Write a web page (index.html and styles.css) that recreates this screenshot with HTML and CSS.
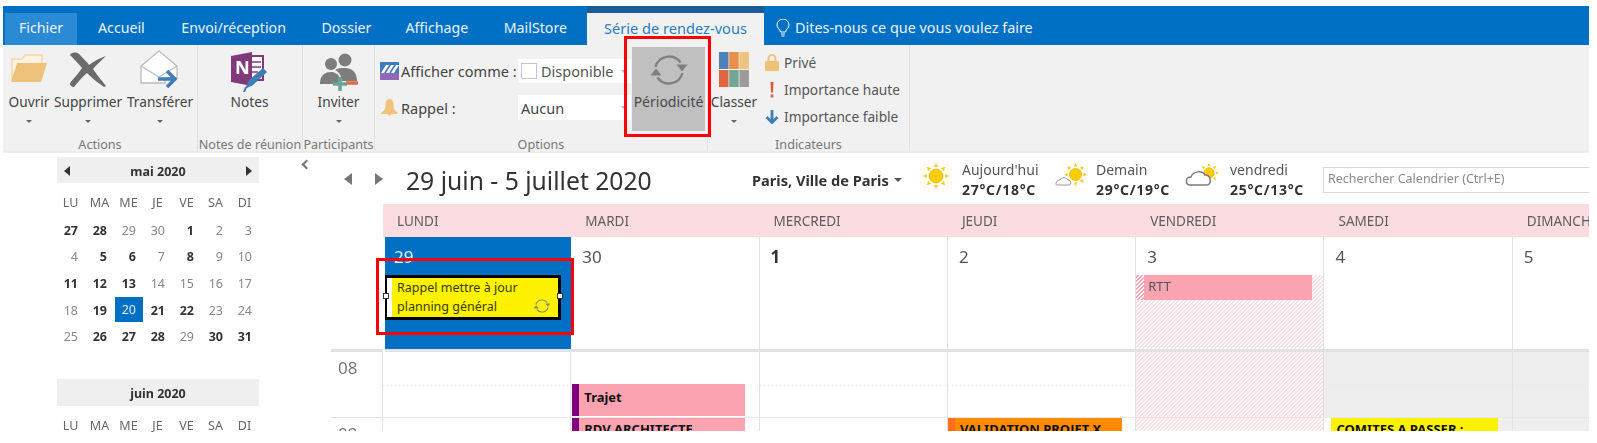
FILE: index.html
```html
<!DOCTYPE html>
<html lang="fr">
<head>
<meta charset="utf-8">
<title>Série de rendez-vous</title>
<link rel="stylesheet" href="styles.css">
</head>
<body>
<svg class="defs" width="0" height="0" aria-hidden="true">
  <symbol id="sync" viewBox="0 0 40 40">
    <path d="M6.500 17A14 14 0 0 1 31.500 12.500M33.500 23A14 14 0 0 1 8.500 27.500" fill="none" stroke="currentColor" stroke-width="2.300"/>
    <path d="M27.500 14.500H38.500L33 21.500ZM1.500 25.500H12.500L7 18.500Z" fill="currentColor"/>
  </symbol>
  <symbol id="sun" viewBox="0 0 26 26">
    <path fill="#ffc90e" d="M13 0l2 4h-4zM13 26l-2-4h4zM0 13l4-2v4zM26 13l-4 2v-4zM3.800 3.800l4.300 1.400-2.900 2.900zM22.200 22.200l-4.300-1.400 2.900-2.900zM22.200 3.800l-1.400 4.300-2.900-2.900zM3.800 22.200l1.400-4.300 2.900 2.900z"/>
    <circle cx="13" cy="13" r="6.800" fill="#ffcc00" stroke="#f7b500"/>
  </symbol>
</svg>

<div class="app">
  <nav class="tabs">
    <span class="tab tab-file">Fichier</span>
    <span class="tab tab-a">Accueil</span>
    <span class="tab tab-b">Envoi/réception</span>
    <span class="tab tab-c">Dossier</span>
    <span class="tab tab-d">Affichage</span>
    <span class="tab tab-e">MailStore</span>
    <span class="tab tab-active">Série de rendez-vous</span>
    <span class="tell">
      <svg class="bulb" viewBox="0 0 14 18"><path d="M4.500 13C4 10 1 9 1 6a6 6 0 0 1 12 0c0 3-3 4-3.500 7zM5 15h4M5.500 17h3" fill="none" stroke="#fff" stroke-width="1"/></svg>
      Dites-nous ce que vous voulez faire
    </span>
  </nav>

  <section class="ribbon">
    <div class="group g-actions">
      <div class="group-body actions-body">
        <div class="big b-open">
          <svg class="ico" width="38" height="30" viewBox="0 0 38 30"><path d="M2 27V6h10l3-4h17v8" fill="#fdf3e2" stroke="#f2d7a8" stroke-width="1.500"/><path d="M1 29L7 10h30L31 29z" fill="#efc27c"/></svg>
          <span class="lbl">Ouvrir</span><i class="caret"></i>
        </div>
        <div class="big b-del">
          <svg class="ico" width="38" height="36" viewBox="0 0 38 36"><path d="M1 3C3 0 7 0 10 2C14 6 18 10 20 13C25 9 31 6 37 4C32 9 27 13 24 17C28 23 33 29 37 34L35 35C29 31 23 26 18 21C13 25 9 30 5 35C2 35 1 33 1 31C5 26 10 21 13 16C9 11 5 7 1 3Z" fill="#6b6b6b"/></svg>
          <span class="lbl">Supprimer</span><i class="caret"></i>
        </div>
        <div class="big b-fwd">
          <svg class="ico" width="40" height="40" viewBox="0 0 40 40"><path d="M1 16L19 1L37 16V28H25V33H1Z" fill="#fff" stroke="#bdbdbd" stroke-width="1.300"/><path d="M1 16L19 27L37 16" fill="none" stroke="#bdbdbd" stroke-width="1.300"/><path d="M18 32H33M27 24L35 32L27 40" transform="translate(0 -3)" fill="none" stroke="#3f7cb8" stroke-width="3.500"/></svg>
          <span class="lbl">Transférer</span><i class="caret"></i>
        </div>
      </div>
      <div class="group-label">Actions</div>
    </div>

    <div class="group g-notes">
      <div class="group-body notes-body">
        <div class="big b-notes">
          <svg class="ico" width="40" height="40" viewBox="0 0 40 40"><path d="M20 4H33V28H20z" fill="#fff" stroke="#80397b" stroke-width="2"/><path d="M22 10h9M22 15h9M22 20h6" stroke="#80397b" stroke-width="1.500"/><path d="M1 4L22 0V34L1 30Z" fill="#80397b"/><text class="n-mark" x="5" y="22">N</text><path d="M15 37L19 28L33 16L37 20L23 33Z" fill="#3f7cb8"/><path d="M14 40L16 35" stroke="#3f7cb8" stroke-width="2"/></svg>
          <span class="lbl">Notes</span>
        </div>
      </div>
      <div class="group-label">Notes de réunion</div>
    </div>

    <div class="group g-part">
      <div class="group-body part-body">
        <div class="big b-inv">
          <svg class="ico" width="40" height="38" viewBox="0 0 40 38"><circle cx="12" cy="11" r="6" fill="#7d7d7d"/><circle cx="26" cy="7" r="6.500" fill="#7d7d7d"/><path d="M1 31C1 22 6 19 12 19C16 19 20 21 21 26L21 31Z" fill="#7d7d7d"/><path d="M16 17C19 15 22 15 26 15C33 15 38 19 38 28H23C22 22 20 19 16 17Z" fill="#7d7d7d"/><path d="M21 24V38M14 31H28" stroke="#66a596" stroke-width="3.500"/><path d="M27 30H39" stroke="#e06c45" stroke-width="3.500"/></svg>
          <span class="lbl">Inviter</span><i class="caret"></i>
        </div>
      </div>
      <div class="group-label">Participants</div>
    </div>

    <div class="group g-options">
      <div class="group-body options-body">
        <div class="form-col">
          <div class="form-row">
            <svg class="show-ico" width="19" height="18" viewBox="0 0 19 18"><rect width="19" height="11" fill="#3e7cc0"/><rect y="11" width="19" height="7" fill="#9168b8"/><path d="M1 11L6 3H9L4 11ZM6 11L11 3H14L9 11ZM11 11L16 3H19L14 11Z" fill="#fff"/></svg>
            <span class="form-label">Afficher comme :</span>
            <span class="combo"><i class="swatch"></i>Disponible</span>
          </div>
          <div class="form-row row-two">
            <svg class="bell-ico" width="19" height="17" viewBox="0 0 16 17"><path d="M8 0C11 0 12 3 12 6C12 10 13 11 15 13H1C3 11 4 10 4 6C4 3 5 0 8 0Z" fill="#f0c27d"/><path d="M0 13H16V15H0ZM6 15H10L8 17Z" fill="#f0c27d"/></svg>
            <span class="form-label">Rappel :</span>
            <span class="combo combo-b">Aucun</span>
          </div>
        </div>
        <div class="big b-recur">
          <svg class="ico sync-lg"><use href="#sync"/></svg>
          <span class="lbl">Périodicité</span>
        </div>
      </div>
      <div class="group-label">Options</div>
    </div>

    <div class="group g-tags">
      <div class="group-body tags-body">
        <div class="big b-class">
          <svg class="ico" width="30" height="35" viewBox="0 0 30 35">
            <rect width="9.500" height="17" fill="#4d81b8"/><rect x="10.200" width="9.500" height="17" fill="#e8904a"/><rect x="20.400" width="9.500" height="17" fill="#eec27f"/>
            <rect y="18" width="9.500" height="17" fill="#e06540"/><rect x="10.200" y="18" width="9.500" height="17" fill="#73a795"/><rect x="20.400" y="18" width="9.500" height="17" fill="#9a9a9a"/>
          </svg>
          <span class="lbl">Classer</span><i class="caret"></i>
        </div>
        <div class="flags">
          <div class="flag">
            <svg class="flag-ico" width="14" height="17" viewBox="0 0 14 17"><path d="M3.500 8V4.500a3.500 3.500 0 0 1 7 0V8" fill="none" stroke="#efc27c" stroke-width="2"/><rect y="7" width="14" height="10" rx="1" fill="#efc27c"/></svg>
            <span>Privé</span>
          </div>
          <div class="flag">
            <svg class="flag-ico" width="14" height="16" viewBox="0 0 14 16"><path d="M5.500 0H8.500L8 10.500H6ZM5.700 12.500H8.300V15.500H5.700Z" fill="#dc5a36"/></svg>
            <span>Importance haute</span>
          </div>
          <div class="flag">
            <svg class="flag-ico" width="14" height="14" viewBox="0 0 14 14"><path d="M7 0V12M1.500 7L7 12.500L12.500 7" fill="none" stroke="#3f7cb8" stroke-width="2.800"/></svg>
            <span>Importance faible</span>
          </div>
        </div>
      </div>
      <div class="group-label">Indicateurs</div>
    </div>
  </section>

  <div class="body">
    <aside class="sidebar">
      <button class="collapse" aria-label="Réduire"></button>
      <div class="month">
        <div class="month-head"><i class="tri tri-l"></i><span>mai 2020</span><i class="tri tri-r"></i></div>
        <div class="dow"><span>LU</span><span>MA</span><span>ME</span><span>JE</span><span>VE</span><span>SA</span><span>DI</span></div>
        <div class="dates">
          <b>27</b><b>28</b><span>29</span><span>30</span><b>1</b><span>2</span><span>3</span>
          <span>4</span><b>5</b><b>6</b><span>7</span><b>8</b><span>9</span><span>10</span>
          <b>11</b><b>12</b><b>13</b><span>14</span><span>15</span><span>16</span><span>17</span>
          <span>18</span><b>19</b><span class="today">20</span><b>21</b><b>22</b><span>23</span><span>24</span>
          <span>25</span><b>26</b><b>27</b><b>28</b><span>29</span><b>30</b><b>31</b>
        </div>
      </div>
      <div class="month month-2">
        <div class="month-head head-center"><span>juin 2020</span></div>
        <div class="dow"><span>LU</span><span>MA</span><span>ME</span><span>JE</span><span>VE</span><span>SA</span><span>DI</span></div>
      </div>
    </aside>

    <main class="main">
      <header class="topbar">
        <i class="nav-tri nav-l"></i><i class="nav-tri nav-r"></i>
        <h1 class="range">29 juin - 5 juillet 2020</h1>
        <span class="place">Paris, Ville de Paris</span><i class="caret caret-place"></i>
        <svg class="w-ico w-1"><use href="#sun"/></svg>
        <div class="weather w-t1"><span>Aujourd'hui</span><b>27°C/18°C</b></div>
        <svg class="w-2" width="32" height="24" viewBox="0 0 32 24"><use href="#sun" x="9" y="0" width="23" height="23"/><path d="M2 22C0 22 1 17 5 17C6 14 12 14 13 17C16 17 17 22 14 22Z" fill="#fff" stroke="#9a9a9a"/></svg>
        <div class="weather w-t2"><span>Demain</span><b>29°C/19°C</b></div>
        <svg class="w-3" width="36" height="24" viewBox="0 0 36 24"><use href="#sun" x="14" y="0" width="20" height="20"/><path d="M5 22C0 22 0 14 6 14C8 8 17 7 20 12C26 11 27 22 22 22Z" fill="#fff" stroke="#7c7c7c" stroke-width="1.500"/></svg>
        <div class="weather w-t3"><span>vendredi</span><b>25°C/13°C</b></div>
        <div class="search">Rechercher Calendrier (Ctrl+E)</div>
      </header>

      <div class="cal">
        <div class="corner"></div>
        <div class="dayname">LUNDI</div><div class="dayname">MARDI</div><div class="dayname">MERCREDI</div><div class="dayname">JEUDI</div><div class="dayname">VENDREDI</div><div class="dayname">SAMEDI</div><div class="dayname">DIMANCHE</div>

        <div class="gutter-top"></div>
        <div class="allday allday-sel"><span class="num num-w">29</span>
          <div class="appt">
            <i class="grip grip-l"></i><i class="grip grip-r"></i>
            <span>Rappel mettre à jour<br>planning général</span>
            <svg class="appt-sync"><use href="#sync"/></svg>
          </div>
        </div>
        <div class="allday"><span class="num">30</span></div>
        <div class="allday"><span class="num num-b">1</span></div>
        <div class="allday"><span class="num">2</span></div>
        <div class="allday allday-rtt"><span class="num">3</span><div class="rtt"><i class="rtt-hatch"></i><span>RTT</span></div></div>
        <div class="allday"><span class="num">4</span></div>
        <div class="allday"><span class="num">5</span></div>

        <div class="hours"><span>08</span></div>
        <div class="slot"></div>
        <div class="slot"><div class="ev ev-trajet"><i class="stripe st-purple"></i><b>Trajet</b></div></div>
        <div class="slot"></div>
        <div class="slot"></div>
        <div class="slot slot-oof"></div>
        <div class="slot slot-off"></div>
        <div class="slot slot-off"></div>

        <div class="hours hours-9"><span>09</span></div>
        <div class="slot2"></div>
        <div class="slot2"><div class="ev ev-rdv"><i class="stripe st-purple"></i><b>RDV ARCHITECTE</b></div></div>
        <div class="slot2"></div>
        <div class="slot2"><div class="ev ev-val"><i class="stripe st-orange"></i><b>VALIDATION PROJET X</b></div></div>
        <div class="slot2 slot-oof"></div>
        <div class="slot2 slot-off"><div class="ev ev-com"><i class="stripe st-white"></i><b>COMITES A PASSER :</b></div></div>
        <div class="slot2 slot-off"></div>
      </div>
    </main>
  </div>
  <div class="mark mark-recur"></div>
  <div class="mark mark-appt"></div>
</div>
</body>
</html>
```
FILE: styles.css
```css
* { box-sizing: border-box; }
html, body { margin: 0; padding: 0; background: #fff; }
body { font-family: "Noto Sans", "Open Sans", sans-serif; color: #444; overflow: hidden; height: 443px; }
.defs { position: absolute; }
i { display: block; font-style: normal; }

.app { position: relative; width: 1586px; height: 431px; margin: 6px 0 0 3px; overflow: hidden; filter: blur(0.4px); }

/* Tabs */
.tabs { display: flex; align-items: flex-end; height: 39px; background: #0070c4; color: #eaf3fb; font-size: 14.200px; }
.tab { display: flex; align-items: center; height: 32px; white-space: nowrap; padding-bottom: 3px; }
.tab-file { width: 72px; margin-left: 2px; justify-content: center; background: #2a8ad4; }
.tab-a { margin-left: 21px; }
.tab-b { margin-left: 36.500px; }
.tab-c { margin-left: 35.500px; }
.tab-d { margin-left: 34px; }
.tab-e { margin-left: 35.500px; }
.tab-active { width: 177px; margin-left: 20px; justify-content: center; background: #f1f1f1; color: #2a7cc0; box-shadow: 0 -7px 0 #1c5c94; font-size: 14.600px; }
.tell { display: flex; align-items: center; gap: 5px; height: 32px; margin-left: 12px; padding-bottom: 3px; white-space: nowrap; font-size: 14.400px; }
.bulb { width: 14px; height: 18px; }

/* Ribbon */
.ribbon { display: flex; height: 108px; background: #f1f1f1; font-size: 13.700px; color: #555; border-bottom: 2px solid #ececec; }
.group { display: flex; flex-direction: column; height: 106px; padding: 2px 0 0; border-right: 1px solid #e2e2e2; position: relative; }
.group-body { flex: 1; display: flex; min-height: 0; }
.group-label { height: 17px; line-height: 22px; font-size: 12.600px; color: #777; text-align: center; white-space: nowrap; }
.g-actions { width: 195px; }
.g-notes { width: 105px; }
.g-part { width: 72px; }
.g-options { width: 333px; }
.g-tags { width: 202px; }
.big { display: flex; flex-direction: column; align-items: center; color: #444; position: relative; }
.ico { display: block; flex: none; }
.lbl { position: absolute; top: 45px; left: 50%; transform: translateX(-50%); white-space: nowrap; line-height: 20px; }
.caret { position: absolute; top: 73px; left: 50%; margin-left: -3px; width: 0; height: 0; border: 3px solid transparent; border-top: 3px solid #666; border-bottom: 0; }
.actions-body { padding-left: 7px; }
.b-open { width: 38px; padding-top: 6px; margin-right: 21px; }
.b-del { width: 38px; padding-top: 5px; margin-right: 33px; }
.b-fwd { width: 40px; padding-top: 3px; }
.notes-body { justify-content: center; }
.b-notes { width: 40px; padding-top: 5px; margin-left: 30px; margin-right: 31px; }
.part-body { justify-content: center; }
.b-inv { width: 40px; padding-top: 6px; }
.options-body { padding-left: 5px; }
.form-col { width: 252px; padding-top: 12px; }
.form-row { display: flex; align-items: center; height: 24px; color: #444; }
.row-two { margin-top: 12px; height: 25px; }
.show-ico, .bell-ico { flex: none; }
.form-label { margin-left: 2px; width: 117px; white-space: nowrap; font-size: 14.500px; }
.combo { display: flex; align-items: center; width: 113px; height: 24px; background: #fff; padding-left: 3px; font-size: 14.500px; color: #555; }
.combo::after { content: ""; margin-left: auto; margin-right: 6px; border: 2.500px solid transparent; border-top: 3px solid #bbb; border-bottom: 0; }
.combo-b { height: 25px; color: #444; }
.swatch { width: 16px; height: 16px; border: 1px solid #c8bfe0; margin-right: 4px; background: #fff; }
.b-recur { width: 73px; height: 84px; margin-left: 0; background: #c0c0c0; color: #4a4a4a; }
.sync-lg { width: 40px; height: 40px; margin-top: 3px; color: #808080; }
.b-recur .lbl { top: 45px; font-size: 14px; }
.tags-body { padding-left: 5px; }
.b-class { width: 30px; padding-top: 5px; margin-left: 6px; }
.flags { margin-left: 16px; padding-top: 2px; }
.flag { display: flex; align-items: center; gap: 5px; height: 27px; white-space: nowrap; color: #555; }
.flag-ico { flex: none; }
.n-mark { font: 700 18px "Noto Sans", sans-serif; fill: #fff; }

/* Body */
.body { display: flex; height: 278px; }
.sidebar { width: 315px; position: relative; padding: 4px 0 0 54px; flex: none; }
.collapse { position: absolute; top: 8px; left: 300px; width: 7px; height: 7px; padding: 0; background: none; border: 0; border-left: 2.500px solid #777; border-bottom: 2.500px solid #777; transform: rotate(45deg); }
.month { width: 202px; }
.month-2 { margin-top: 29px; }
.month-head { display: flex; align-items: center; justify-content: space-between; height: 26px; padding: 2px 7px 0; background: #efefef; font-weight: 700; font-size: 12.500px; color: #333; }
.head-center { justify-content: center; height: 27px; }
.tri { width: 0; height: 0; border: 5px solid transparent; }
.tri-l { border-right: 6px solid #333; border-left: 0; }
.tri-r { border-left: 6px solid #333; border-right: 0; }
.dow { display: grid; grid-template-columns: repeat(7, 29px); margin-top: 8px; height: 24px; line-height: 24px; text-align: center; font-size: 12.500px; color: #666; margin-left: -1px; }
.dates { display: grid; grid-template-columns: repeat(7, 29px); grid-auto-rows: 26.600px; margin-top: 2px; margin-left: -1px; font-size: 12.500px; color: #888; }
.dates > * { display: flex; align-items: center; justify-content: flex-end; padding-right: 7px; font-weight: 400; }
.dates b { font-weight: 700; color: #333; }
.dates .today { background: #0070c4; color: #dfeefa; width: 28px; height: 25px; justify-self: end; }

/* Main */
.main { flex: 1; min-width: 0; overflow: hidden; position: relative; }
.topbar { position: relative; display: flex; align-items: center; height: 51px; }
.nav-tri { width: 0; height: 0; border: 6px solid transparent; flex: none; }
.nav-l { margin-left: 26px; border-right: 8px solid #777; border-left: 0; }
.nav-r { margin-left: 23px; border-left: 8px solid #777; border-right: 0; }
.range { margin: 4px 0 0 23px; font-size: 24.700px; font-weight: 400; color: #333; white-space: nowrap; width: 346px; }
.place { font-weight: 700; font-size: 14.600px; color: #333; white-space: nowrap; width: 140px; margin-top: 2px; }
.caret-place { position: static; border-width: 4px; border-top: 4px solid #555; border-bottom: 0; margin-left: 2px; margin-top: 2px; }
.w-ico { width: 26px; height: 26px; flex: none; margin: -5px 0 0 21px; }
.weather { display: flex; flex-direction: column; margin-top: 2px; white-space: nowrap; font-size: 14px; line-height: 20px; color: #555; }
.weather b { color: #333; font-size: 14px; letter-spacing: 0.700px; }
.w-t1 { margin-left: 13px; width: 93px; }
.w-2 { flex: none; margin: -8px 0 0 0; }
.w-t2 { margin-left: 9px; width: 89px; }
.w-3 { flex: none; margin: -8px 0 0 0; }
.w-t3 { margin-left: 9px; width: 93px; }
.search { flex: none; width: 266px; height: 26px; margin-top: 2px; border: 1px solid #d8d8d8; border-width: 1px 0 1px 1px; padding-left: 4px; line-height: 22px; font-size: 12.500px; color: #8a8a8a; white-space: nowrap; background: #fff; }

.cal { display: grid; grid-template-columns: 65px repeat(7, 188.300px); grid-template-rows: 33px 115px 66px 19px; }
.corner { background: #fff; }
.gutter-top { margin-left: 13px; border-bottom: 3px solid #e2e2e2; }
.dayname { background: #fbdde1; padding-left: 14px; line-height: 34px; font-size: 13.500px; color: #5c5c5c; white-space: nowrap; }
.allday { position: relative; border-right: 1px solid #e2e2e2; border-bottom: 3px solid #e2e2e2; }
.allday-sel { background: #0070c4; background-clip: padding-box; margin-left: 2px; border-right: 0; }
.num { position: absolute; top: 6px; left: 11px; font-size: 17px; line-height: 27px; color: #555; }
.allday-sel .num { left: 9px; }
.num-w { color: #e6f1fa; }
.num-b { font-weight: 700; color: #333; }
.appt { position: absolute; top: 38px; left: 0; width: 176px; height: 45px; display: flex; background: #fff200; border: 3px solid #000; border-left-width: 2px; padding-left: 10px; box-shadow: inset 5px 0 0 #fff; font-size: 12.500px; line-height: 19px; color: #3a3a00; white-space: nowrap; }
.appt-sync { position: absolute; right: 7px; bottom: 2px; width: 18px; height: 18px; color: #8a8a70; }
.grip { position: absolute; top: 15px; width: 6px; height: 6px; background: #fff; border: 1px solid #333; }
.grip-l { left: -4px; }
.grip-r { right: -5px; }
.allday-rtt { background: repeating-linear-gradient(135deg, #fcdfe3 0 0.900px, #fff 0.900px 2.828px) 0 38px / 100% 100% no-repeat; }
.rtt { position: absolute; top: 38px; left: 0; width: 176px; height: 25px; display: flex; background: #fba3b1; font-size: 13px; color: #555; line-height: 22px; }
.rtt-hatch { width: 8px; margin-right: 4px; background: repeating-linear-gradient(135deg, #fff 0 1.400px, #fba3b1 1.400px 2.828px); }
.hours { border-bottom: 1px solid #e2e2e2; border-right: 1px solid #e2e2e2; margin-left: 13px; padding-left: 7px; font-size: 17px; line-height: 24px; color: #777; }
.hours span { display: block; padding-top: 4px; }
.hours-9 { border-bottom: 0; }
.slot { position: relative; border-right: 1px solid #e2e2e2; border-bottom: 1px solid #e8e8e8; background-image: linear-gradient(90deg, #e4e4e4 1px, transparent 1px); background-size: 4px 1px; background-repeat: repeat-x; background-position: 0 33px; }
.slot2 { position: relative; border-right: 1px solid #e2e2e2; }
.slot-oof { background-color: #fff; background-image: repeating-linear-gradient(135deg, #fcdfe3 0 0.900px, #fff 0.900px 2.828px); background-size: auto; background-position: 0 0; border-bottom-color: #fbd8dd; }
.slot-off { background-color: #eeeeee; }
.ev { position: absolute; display: flex; color: #111; font-size: 13px; white-space: nowrap; left: 0; overflow: hidden; }
.ev b { margin-left: 5px; position: relative; }
.stripe { width: 7px; align-self: stretch; flex: none; }
.st-purple { background: #800080; }
.st-orange { background: #ff6f1c; }
.st-white { background: #fff; }
.ev-trajet { top: 32px; left: 1px; width: 173px; height: 32px; background: #fba3b1; line-height: 27px; }
.ev-rdv { top: 0; left: 1px; width: 173px; height: 19px; background: #fba3b1; }
.ev-val { top: 0; width: 174px; height: 19px; background: #ff8c00; }
.ev-com { top: 0; width: 174px; height: 19px; background: #fff200; }
.ev-rdv b, .ev-val b, .ev-com b { line-height: 18px; top: 2px; }

/* Red call-outs lying over the interface */
.mark { position: absolute; border: 3.500px solid #ff0000; }
.mark-recur { left: 621px; top: 30px; width: 87px; height: 101px; }
.mark-appt { left: 373px; top: 252px; width: 198px; height: 77px; }
```
